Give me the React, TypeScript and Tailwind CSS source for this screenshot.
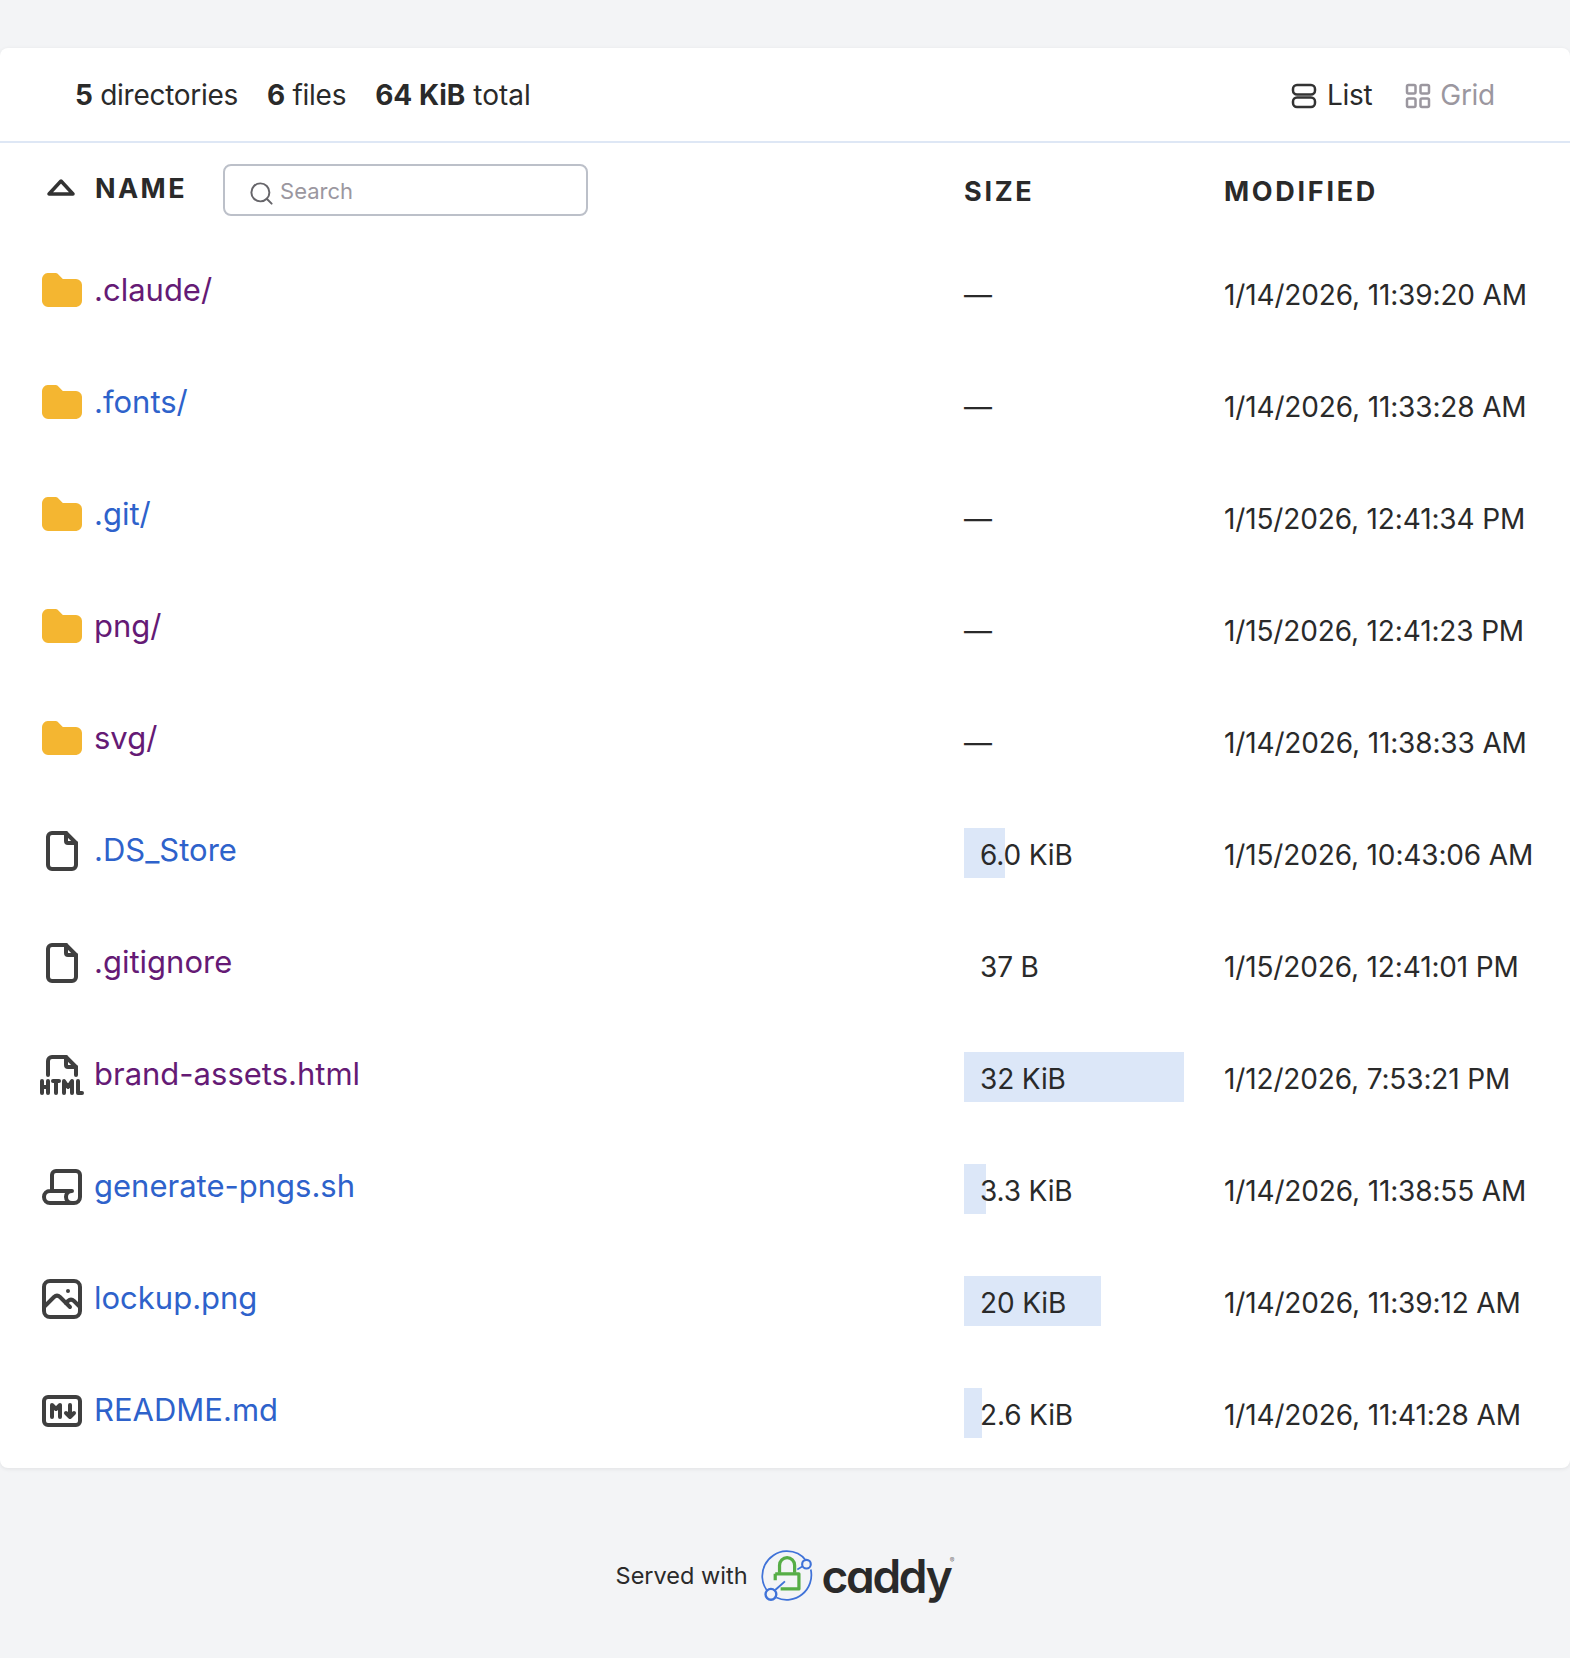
import { Search } from "lucide-react";

type Row = {
  name: string;
  icon: "folder" | "file" | "html" | "script" | "image" | "markdown";
  visited: boolean;
  size: string;
  bar: number;
  modified: string;
};

const rows: Row[] = [
  { name: ".claude/", icon: "folder", visited: true, size: "—", bar: 0, modified: "1/14/2026, 11:39:20 AM" },
  { name: ".fonts/", icon: "folder", visited: false, size: "—", bar: 0, modified: "1/14/2026, 11:33:28 AM" },
  { name: ".git/", icon: "folder", visited: false, size: "—", bar: 0, modified: "1/15/2026, 12:41:34 PM" },
  { name: "png/", icon: "folder", visited: true, size: "—", bar: 0, modified: "1/15/2026, 12:41:23 PM" },
  { name: "svg/", icon: "folder", visited: true, size: "—", bar: 0, modified: "1/14/2026, 11:38:33 AM" },
  { name: ".DS_Store", icon: "file", visited: false, size: "6.0 KiB", bar: 41, modified: "1/15/2026, 10:43:06 AM" },
  { name: ".gitignore", icon: "file", visited: true, size: "37 B", bar: 0, modified: "1/15/2026, 12:41:01 PM" },
  { name: "brand-assets.html", icon: "html", visited: true, size: "32 KiB", bar: 220, modified: "1/12/2026, 7:53:21 PM" },
  { name: "generate-pngs.sh", icon: "script", visited: false, size: "3.3 KiB", bar: 22, modified: "1/14/2026, 11:38:55 AM" },
  { name: "lockup.png", icon: "image", visited: false, size: "20 KiB", bar: 137, modified: "1/14/2026, 11:39:12 AM" },
  { name: "README.md", icon: "markdown", visited: false, size: "2.6 KiB", bar: 18, modified: "1/14/2026, 11:41:28 AM" },
];

function FileIcon({ icon }: { icon: Row["icon"] }) {
  if (icon === "folder") {
    return (
      <svg width="48" height="48" viewBox="0 0 24 24" fill="#f4b631" className="mt-[3px] shrink-0">
        <path d="M9 3a1 1 0 0 1 .608 .206l.1 .087l2.706 2.707h6.586a3 3 0 0 1 2.995 2.824l.005 .176v8a3 3 0 0 1 -2.824 2.995l-.176 .005h-14a3 3 0 0 1 -2.995 -2.824l-.005 -.176v-11a3 3 0 0 1 2.824 -2.995l.176 -.005h4z" />
      </svg>
    );
  }
  const props = {
    width: 48,
    height: 48,
    viewBox: "0 0 24 24",
    fill: "none",
    stroke: "#3f3f3f",
    strokeWidth: 2,
    strokeLinecap: "round" as const,
    strokeLinejoin: "round" as const,
    className: "mt-[3px] shrink-0",
  };
  if (icon === "file") {
    return (
      <svg {...props}>
        <path d="M14 3v4a1 1 0 0 0 1 1h4" />
        <path d="M17 21h-10a2 2 0 0 1 -2 -2v-14a2 2 0 0 1 2 -2h7l5 5v11a2 2 0 0 1 -2 2z" />
      </svg>
    );
  }
  if (icon === "html") {
    return (
      <svg {...props}>
        <path d="M14 3v4a1 1 0 0 0 1 1h4" />
        <path d="M5 12v-7a2 2 0 0 1 2 -2h7l5 5v4" />
        <path d="M2 21v-6" />
        <path d="M5 15v6" />
        <path d="M2 18h3" />
        <path d="M20 15v6h2" />
        <path d="M13 21v-6l2 3l2 -3v6" />
        <path d="M7.5 15h3" />
        <path d="M9 15v6" />
      </svg>
    );
  }
  if (icon === "script") {
    return (
      <svg {...props}>
        <path d="M17 20h-11a3 3 0 0 1 0 -6h11a3 3 0 0 0 0 6h1a3 3 0 0 0 3 -3v-11a2 2 0 0 0 -2 -2h-10a2 2 0 0 0 -2 2v8" />
      </svg>
    );
  }
  if (icon === "image") {
    return (
      <svg {...props}>
        <path d="M15 8h.01" />
        <path d="M3 6a3 3 0 0 1 3 -3h12a3 3 0 0 1 3 3v12a3 3 0 0 1 -3 3h-12a3 3 0 0 1 -3 -3v-12z" />
        <path d="M3 16l5 -5a3 5 0 0 1 3 0l5 5" />
        <path d="M14 14l1 -1a3 5 0 0 1 3 0l3 3" />
      </svg>
    );
  }
  return (
    <svg {...props}>
      <path d="M3 7a2 2 0 0 1 2 -2h14a2 2 0 0 1 2 2v10a2 2 0 0 1 -2 2h-14a2 2 0 0 1 -2 -2z" />
      <path d="M7 15v-6l2 2l2 -2v6" />
      <path d="M14 13l2 2l2 -2m-2 2v-6" />
    </svg>
  );
}

function CaddyMark() {
  return (
    <svg width="56" height="56" viewBox="0 0 52 52" fill="none">
      <path d="M26 3a23 23 0 0 1 19 9M49 20a23 23 0 0 1-32 26M8 39A23 23 0 0 1 26 3" stroke="#3f72d8" strokeWidth="1.6" />
      <path d="M16 24h22v14H21" stroke="#56ad46" strokeWidth="3" strokeLinejoin="round" />
      <path d="M16 24v6M20 23v-7a7 7 0 0 1 14 0v7" stroke="#56ad46" strokeWidth="3" />
      <circle cx="45" cy="15" r="4" stroke="#3f72d8" strokeWidth="2" fill="#f3f4f6" />
      <path d="M41.500 17l-5 3" stroke="#3f72d8" strokeWidth="1.500" />
      <circle cx="12" cy="43" r="5" stroke="#3f72d8" strokeWidth="2.200" fill="#f3f4f6" />
      <path d="M16 39l9-8" stroke="#3f72d8" strokeWidth="1.800" />
    </svg>
  );
}

export default function App() {
  return (
    <div className="min-h-[1658px] bg-[#f3f4f6] pt-12 font-['Inter',sans-serif] text-[#2a2a2a]">
      <div className="flow-root rounded-lg bg-white shadow-[0_1px_4px_rgba(0,0,0,0.08)]">
        <div className="flex h-[95px] items-center justify-between border-b-2 border-[#dee7f5] pl-[75px] pr-[75px]">
          <div className="flex gap-[29px] text-[28px] leading-none tracking-[-0.01em]">
            <span><b className="font-bold">5</b> directories</span>
            <span><b className="font-bold">6</b> files</span>
            <span className="tracking-normal"><b className="font-bold">64 KiB</b> total</span>
          </div>
          <div className="flex items-center gap-[33px] text-[28px] leading-none tracking-[-0.01em]">
            <span className="flex items-center gap-2.5">
              <svg width="26" height="26" viewBox="0 0 26 26" fill="none" stroke="#333" strokeWidth="2.500" className="mt-0.5">
                <rect x="2" y="2" width="22" height="9.500" rx="4" />
                <rect x="2" y="14.500" width="22" height="9.500" rx="4" />
              </svg>
              List
            </span>
            <span className="flex items-center gap-[9px] text-[#9b979f]">
              <svg width="26" height="26" viewBox="0 0 26 26" fill="none" stroke="#9b979f" strokeWidth="2.500" className="mt-0.5">
                <rect x="2" y="2" width="8.500" height="8.500" rx="1.500" />
                <rect x="15.500" y="2" width="8.500" height="8.500" rx="1.500" />
                <rect x="2" y="15.500" width="8.500" height="8.500" rx="1.500" />
                <rect x="15.500" y="15.500" width="8.500" height="8.500" rx="1.500" />
              </svg>
              Grid
            </span>
          </div>
        </div>

        <div className="flex h-[96px] items-center">
          <div className="-mt-1 flex w-[964px] shrink-0 items-center pl-[46px]">
            <svg width="30" height="20" viewBox="0 0 30 20" fill="none" stroke="#333" strokeWidth="3.500" strokeLinejoin="round" className="-mt-0.5">
              <path d="M15 3L3 16h24z" />
            </svg>
            <span className="ml-[19px] -mt-0.5 text-[27px] font-bold leading-none tracking-[0.09em]">NAME</span>
            <div className="ml-[36px] mt-0.5 flex h-[52px] w-[365px] items-center rounded-lg border-2 border-[#bcc0c9] pl-[23px] text-[22px] text-[#9b979f]">
              <Search size={27} strokeWidth={1.75} className="mt-[6px] shrink-0 text-[#66656a]" />
              <span className="ml-[5px] mt-0.5">Search</span>
            </div>
          </div>
          <div className="w-[260px] shrink-0 text-[27px] font-bold leading-none tracking-[0.1em]">SIZE</div>
          <div className="text-[27px] font-bold leading-none tracking-[0.1em]">MODIFIED</div>
        </div>

        {rows.map((row) => (
          <div key={row.name} className="flex h-[112px] items-center last:-mb-[3px]">
            <div className="-mt-[11px] flex w-[964px] shrink-0 items-center gap-2 pl-[38px]">
              <FileIcon icon={row.icon} />
              <a className={"text-[31px] leading-none " + (row.visited ? "text-[#651a75]" : "text-[#2e62cb]")}>{row.name}</a>
            </div>
            <div className={"relative flex h-[50px] w-[260px] shrink-0 items-center text-[28px] tracking-[-0.005em] " + (row.size === "—" ? "" : "pl-4")}>
              {row.bar > 0 && <div className="absolute -top-[2px] bottom-[2px] left-0 bg-[#dce7f8]" style={{ width: row.bar }} />}
              <span className="relative">{row.size}</span>
            </div>
            <div className="text-[28px] tracking-[-0.005em] whitespace-nowrap">{row.modified}</div>
          </div>
        ))}
      </div>

      <div className="mt-[80px] flex items-center justify-center pr-1">
        <span className="text-[23.5px]">Served with</span>
        <span className="ml-[10px]"><CaddyMark /></span>
        <span className="relative ml-2 text-[46px] font-semibold leading-none tracking-[-0.05em] [font-feature-settings:'cv11']">
          caddy
          <span className="absolute -right-1 top-1 text-[7px] font-normal leading-none tracking-normal text-[#777]">®</span>
        </span>
      </div>
    </div>
  );
}
